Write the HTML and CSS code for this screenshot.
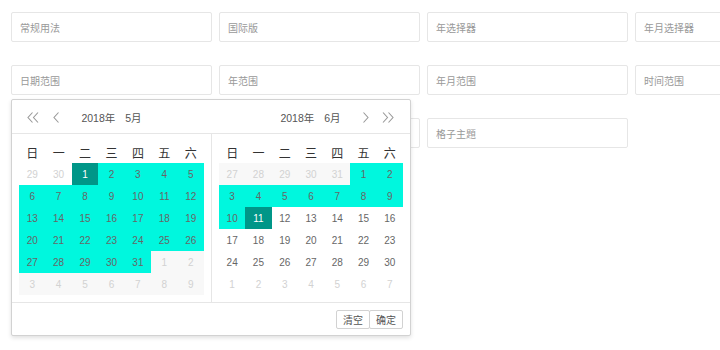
FILE: index.html
```html
<!DOCTYPE html>
<html lang="zh-CN">
<head>
    <meta charset="UTF-8">
    <meta name="viewport" content="width=device-width, initial-scale=1.0">
    <title>laydate 示例</title>
    <link rel="stylesheet" href="styles.css">
</head>
<body>
    <div class="demo">
        <div class="demo-row">
            <input class="field" type="text" placeholder="常规用法">
            <input class="field" type="text" placeholder="国际版">
            <input class="field" type="text" placeholder="年选择器">
            <input class="field" type="text" placeholder="年月选择器">
        </div>
        <div class="demo-row">
            <input class="field" type="text" placeholder="日期范围">
            <input class="field" type="text" placeholder="年范围">
            <input class="field" type="text" placeholder="年月范围">
            <input class="field" type="text" placeholder="时间范围">
        </div>
        <div class="demo-row">
            <input class="field" type="text" placeholder="公历节日">
            <input class="field" type="text" placeholder="自定义重要日">
            <input class="field" type="text" placeholder="格子主題">
        </div>
    </div>

    <!-- popup for 日期范围 -->
    <div class="laydate">
        <div class="laydate-panels">
            <div class="laydate-main">
                <div class="laydate-header">
                    <div class="header-side">
                        <span class="header-btn">
                            <svg width="12" height="11" viewBox="0 0 12 11"><polyline points="5.5,0.5 1,5.5 5.5,10.5"/><polyline points="11,0.5 6.5,5.5 11,10.5"/></svg>
                        </span>
                        <span class="header-btn">
                            <svg width="6" height="11" viewBox="0 0 6 11"><polyline points="5.5,0.5 1,5.5 5.5,10.5"/></svg>
                        </span>
                    </div>
                    <div class="header-title"><span>2018年</span><span>5月</span></div>
                    <div class="header-side side-right"></div>
                </div>
                <div class="laydate-content">
                    <table>
                        <thead>
                            <tr><th>日</th><th>一</th><th>二</th><th>三</th><th>四</th><th>五</th><th>六</th></tr>
                        </thead>
                        <tbody>
                            <tr><td class="day-prev">29</td><td class="day-prev">30</td><td class="this">1</td><td class="selected">2</td><td class="selected">3</td><td class="selected">4</td><td class="selected">5</td></tr>
                            <tr><td class="selected">6</td><td class="selected">7</td><td class="selected">8</td><td class="selected">9</td><td class="selected">10</td><td class="selected">11</td><td class="selected">12</td></tr>
                            <tr><td class="selected">13</td><td class="selected">14</td><td class="selected">15</td><td class="selected">16</td><td class="selected">17</td><td class="selected">18</td><td class="selected">19</td></tr>
                            <tr><td class="selected">20</td><td class="selected">21</td><td class="selected">22</td><td class="selected">23</td><td class="selected">24</td><td class="selected">25</td><td class="selected">26</td></tr>
                            <tr><td class="selected">27</td><td class="selected">28</td><td class="selected">29</td><td class="selected">30</td><td class="selected">31</td><td class="day-next muted">1</td><td class="day-next muted">2</td></tr>
                            <tr><td class="day-next muted">3</td><td class="day-next muted">4</td><td class="day-next muted">5</td><td class="day-next muted">6</td><td class="day-next muted">7</td><td class="day-next muted">8</td><td class="day-next muted">9</td></tr>
                        </tbody>
                    </table>
                </div>
            </div>
            <div class="laydate-main">
                <div class="laydate-header">
                    <div class="header-side"></div>
                    <div class="header-title"><span>2018年</span><span>6月</span></div>
                    <div class="header-side side-right">
                        <span class="header-btn">
                            <svg width="6" height="11" viewBox="0 0 6 11"><polyline points="0.5,0.5 5,5.5 0.5,10.5"/></svg>
                        </span>
                        <span class="header-btn">
                            <svg width="12" height="11" viewBox="0 0 12 11"><polyline points="1,0.5 5.5,5.5 1,10.5"/><polyline points="6.5,0.5 11,5.5 6.5,10.5"/></svg>
                        </span>
                    </div>
                </div>
                <div class="laydate-content content-right">
                    <table>
                        <thead>
                            <tr><th>日</th><th>一</th><th>二</th><th>三</th><th>四</th><th>五</th><th>六</th></tr>
                        </thead>
                        <tbody>
                            <tr><td class="day-prev muted">27</td><td class="day-prev muted">28</td><td class="day-prev muted">29</td><td class="day-prev muted">30</td><td class="day-prev muted">31</td><td class="selected">1</td><td class="selected">2</td></tr>
                            <tr><td class="selected">3</td><td class="selected">4</td><td class="selected">5</td><td class="selected">6</td><td class="selected">7</td><td class="selected">8</td><td class="selected">9</td></tr>
                            <tr><td class="selected">10</td><td class="this">11</td><td>12</td><td>13</td><td>14</td><td>15</td><td>16</td></tr>
                            <tr><td>17</td><td>18</td><td>19</td><td>20</td><td>21</td><td>22</td><td>23</td></tr>
                            <tr><td>24</td><td>25</td><td>26</td><td>27</td><td>28</td><td>29</td><td>30</td></tr>
                            <tr><td class="day-next">1</td><td class="day-next">2</td><td class="day-next">3</td><td class="day-next">4</td><td class="day-next">5</td><td class="day-next">6</td><td class="day-next">7</td></tr>
                        </tbody>
                    </table>
                </div>
            </div>
        </div>
        <div class="laydate-footer">
            <span class="footer-btn">清空</span><span class="footer-btn">确定</span>
        </div>
    </div>
</body>
</html>
```

FILE: styles.css
```css
* {
    margin: 0;
    padding: 0;
    box-sizing: border-box;
}

html,
body {
    overflow: hidden;
}

body {
    font-family: "Noto Sans CJK SC", sans-serif;
    font-size: 10px;
    color: #666;
    background: #fff;
    width: 720px;
    height: 350px;
    position: relative;
}

.demo {
    padding: 12px 0 0 11px;
    overflow: hidden;
}

.demo-row {
    display: flex;
    gap: 7px;
    margin-bottom: 23px;
}

.field {
    flex: 0 0 201px;
    width: 201px;
    height: 30px;
    padding-left: 8px;
    border: 1px solid #e6e6e6;
    border-radius: 2px;
    background: #fff;
    font-family: inherit;
    font-size: 10px;
    color: #666;
    outline: none;
}

.field::placeholder {
    color: #999;
}

/* date range popup */
.laydate {
    position: absolute;
    left: 11px;
    top: 99px;
    width: 400px;
    border: 1px solid #d2d2d2;
    border-radius: 2px;
    background: #fff;
    box-shadow: 0 2px 4px rgba(0, 0, 0, 0.12);
    font-family: "Liberation Sans", "Noto Sans CJK SC", sans-serif;
}

.laydate-panels {
    display: flex;
}

.laydate-main {
    flex: 1 1 0;
    min-width: 0;
}

.laydate-header {
    display: grid;
    grid-template-columns: 1fr auto 1fr;
    align-items: center;
    height: 34px;
    border-bottom: 1px solid #e6e6e6;
    padding-top: 2px;
}

.header-side {
    display: flex;
    align-items: center;
    gap: 14px;
    padding-left: 15px;
}

.header-side.side-right {
    justify-content: flex-end;
    gap: 13px;
    padding-left: 0;
    padding-right: 16px;
}

.header-btn {
    display: flex;
}

.header-btn svg {
    fill: none;
    stroke: #999;
    stroke-width: 1.1;
}

.header-title {
    display: flex;
    gap: 10px;
    color: #555;
    font-size: 10.5px;
}

.laydate-content {
    padding: 7px;
}

.laydate-content.content-right {
    border-left: 1px solid #e6e6e6;
}

.laydate-content table {
    width: 100%;
    border-collapse: collapse;
    table-layout: fixed;
}

.laydate-content th {
    height: 22px;
    font-weight: normal;
    font-size: 12px;
    color: #333;
    text-align: center;
}

.laydate-content td {
    height: 22px;
    text-align: center;
    color: #666;
    font-size: 10px;
}

.laydate-content td.day-prev,
.laydate-content td.day-next {
    color: #d2d2d2;
}

.laydate-content td.muted {
    background: #f8f8f8;
}

.laydate-content td.selected {
    background: #00f7de;
}

.laydate-content td.this {
    background: #009688;
    color: #fff;
}

.laydate-footer {
    display: flex;
    justify-content: flex-end;
    align-items: center;
    height: 33px;
    padding-right: 7px;
    border-top: 1px solid #e6e6e6;
}

.footer-btn {
    display: inline-flex;
    align-items: center;
    justify-content: center;
    width: 34px;
    height: 19px;
    margin-left: -1px;
    border: 1px solid #d2d2d2;
    border-radius: 2px;
    font-family: "Noto Sans CJK SC", sans-serif;
    font-size: 10px;
    color: #555;
    background: #fff;
}
```
